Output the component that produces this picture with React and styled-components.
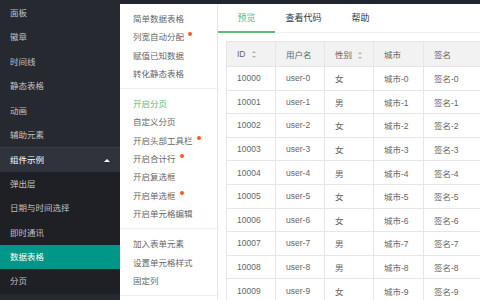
import React from "react";
import styled, { createGlobalStyle } from "styled-components";

const GlobalStyle = createGlobalStyle`
  body {
    margin: 0;
    overflow: hidden;
    font-family: "Liberation Sans", "Noto Sans CJK SC", sans-serif;
  }
`;

const sideItems = ["面板", "徽章", "时间线", "静态表格", "动画", "辅助元素"];
const childItems = ["弹出层", "日期与时间选择", "即时通讯", "数据表格", "分页"];

const groups = [
  [
    { text: "简单数据表格" },
    { text: "列宽自动分配", dot: true },
    { text: "赋值已知数据" },
    { text: "转化静态表格" },
  ],
  [
    { text: "开启分页", active: true },
    { text: "自定义分页" },
    { text: "开启头部工具栏", dot: true },
    { text: "开启合计行", dot: true },
    { text: "开启复选框" },
    { text: "开启单选框", dot: true },
    { text: "开启单元格编辑" },
  ],
  [{ text: "加入表单元素" }, { text: "设置单元格样式" }, { text: "固定列" }],
];

const sexes = ["女", "男", "女", "女", "男", "女", "女", "男", "男", "女"];

const App = () => {
  return (
    <Page>
      <GlobalStyle />
      <Sidebar>
        {sideItems.map((t) => (
          <NavItem key={t}>{t}</NavItem>
        ))}
        <NavParent>
          组件示例
          <Caret />
        </NavParent>
        <NavChildren>
          {childItems.map((t) => (
            <NavItem key={t} $selected={t === "数据表格"}>
              {t}
            </NavItem>
          ))}
        </NavChildren>
      </Sidebar>
      <Main>
        <TopStrip />
        <Body>
          <SubMenu>
            {groups.map((g, i) => (
              <Group key={i}>
                {g.map((it) => (
                  <SubItem key={it.text} $active={it.active}>
                    {it.text}
                    {it.dot && <Dot />}
                  </SubItem>
                ))}
              </Group>
            ))}
          </SubMenu>
          <Content>
            <Tabs>
              <Tab $active>预览</Tab>
              <Tab>查看代码</Tab>
              <Tab>帮助</Tab>
            </Tabs>
            <Table>
              <colgroup>
                <col style={{ width: 49 }} />
                <col style={{ width: 49 }} />
                <col style={{ width: 49 }} />
                <col style={{ width: 50 }} />
                <col style={{ width: 90 }} />
              </colgroup>
              <thead>
                <tr>
                  <Th>
                    ID<Sort />
                  </Th>
                  <Th>用户名</Th>
                  <Th>
                    性别<Sort />
                  </Th>
                  <Th>城市</Th>
                  <Th>签名</Th>
                </tr>
              </thead>
              <tbody>
                {sexes.map((s, i) => (
                  <tr key={i}>
                    <Td>{10000 + i}</Td>
                    <Td>user-{i}</Td>
                    <Td>{s}</Td>
                    <Td>城市-{i}</Td>
                    <Td>签名-{i}</Td>
                  </tr>
                ))}
              </tbody>
            </Table>
          </Content>
        </Body>
      </Main>
    </Page>
  );
};

export default App;

const Page = styled.div`
  width: 480px;
  height: 300px;
  display: flex;
  overflow: hidden;
  background: #fff;
`;

const Sidebar = styled.div`
  width: 120px;
  flex-shrink: 0;
  background: #262930;
  padding-top: 1px;
  box-sizing: border-box;
`;

const NavItem = styled.div`
  height: 24.4px;
  line-height: 24.4px;
  padding-left: 10px;
  font-size: 8.5px;
  color: ${(p) => (p.$selected ? "#fff" : "rgba(255,255,255,0.72)")};
  background: ${(p) => (p.$selected ? "#009688" : "transparent")};
`;

const NavParent = styled(NavItem)`
  display: flex;
  align-items: center;
  justify-content: space-between;
  padding-right: 10px;
  color: #fff;
  background: #30333b;
  border-top: 1px solid #3a3d45;
  height: 23.4px;
`;

const Caret = styled.span`
  width: 0;
  height: 0;
  border-left: 3.5px solid transparent;
  border-right: 3.5px solid transparent;
  border-bottom: 3.5px solid #fff;
`;

const NavChildren = styled.div`
  background: #1e2026;
`;

const Main = styled.div`
  flex: 1;
  display: flex;
  flex-direction: column;
  min-width: 0;
`;

const TopStrip = styled.div`
  height: 4px;
  background: #23262e;
  flex-shrink: 0;
`;

const Body = styled.div`
  flex: 1;
  display: flex;
  min-height: 0;
`;

const SubMenu = styled.div`
  width: 97px;
  flex-shrink: 0;
  border-right: 1px solid #e6e6e6;
`;

const Group = styled.div`
  padding: 6px 0 5px;
  border-bottom: 1px solid #eee;
`;

const SubItem = styled.div`
  height: 18.3px;
  line-height: 18.3px;
  padding-left: 13px;
  font-size: 8.5px;
  white-space: nowrap;
  color: ${(p) => (p.$active ? "#5FB878" : "#666")};
`;

const Dot = styled.span`
  display: inline-block;
  width: 4px;
  height: 4px;
  border-radius: 50%;
  background: #ff5722;
  margin-left: 4px;
  position: relative;
  top: -4px;
`;

const Content = styled.div`
  flex: 1;
  min-width: 0;
  overflow: hidden;
`;

const Tabs = styled.div`
  display: flex;
  height: 28px;
  border-bottom: 1px solid #f0f0f0;
`;

const Tab = styled.div`
  width: 57px;
  text-align: center;
  line-height: 28px;
  font-size: 9px;
  color: ${(p) => (p.$active ? "#5FB878" : "#333")};
  box-shadow: ${(p) => (p.$active ? "inset 0 -2px 0 #5FB878" : "none")};
  margin-bottom: -1px;
  height: 29px;
  box-sizing: border-box;
`;

const Table = styled.table`
  margin: 8px 0 0 8px;
  border-collapse: collapse;
  table-layout: fixed;
  width: 287px;
  font-size: 8.5px;
  color: #666;
`;

const Th = styled.th`
  height: 24px;
  padding: 0 0 0 10px;
  text-align: left;
  font-weight: normal;
  background: #f2f2f2;
  border: 1px solid #e6e6e6;
  white-space: nowrap;
`;

const Td = styled.td`
  height: 22.6px;
  padding: 0 0 0 10px;
  border: 1px solid #e6e6e6;
  white-space: nowrap;
`;

const Sort = styled.span`
  display: inline-block;
  vertical-align: middle;
  margin-left: 6px;
  width: 0;
  height: 7px;
  position: relative;
  &::before,
  &::after {
    content: "";
    position: absolute;
    left: 0;
    border-left: 2.5px solid transparent;
    border-right: 2.5px solid transparent;
  }
  &::before {
    top: 0;
    border-bottom: 2.5px solid #b2b2b2;
  }
  &::after {
    bottom: 0;
    border-top: 2.5px solid #b2b2b2;
  }
`;
